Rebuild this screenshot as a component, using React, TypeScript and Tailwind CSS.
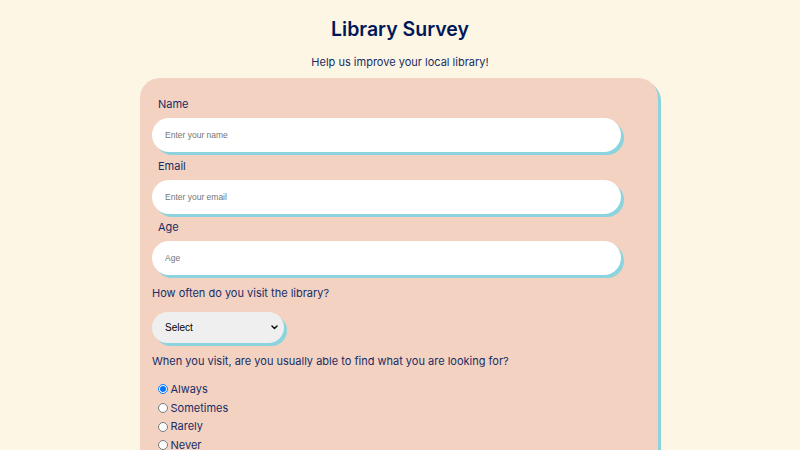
import { type FC } from "react";

const fields = [
  { label: "Name", placeholder: "Enter your name", type: "text", gap: "mt-[7px]" },
  { label: "Email", placeholder: "Enter your email", type: "email", gap: "mt-[7px]" },
  { label: "Age", placeholder: "Age", type: "number", gap: "mt-[6px]" },
];

const visitOptions = ["Always", "Sometimes", "Rarely", "Never"];

const TextField: FC<{ label: string; placeholder: string; type: string; gap: string }> = ({
  label,
  placeholder,
  type,
  gap,
}) => {
  return (
    <div className="flex flex-col">
      <label className={`${gap} block h-[14px] pl-[6px] text-[11px] leading-[14px]`}>{label}</label>
      <input
        type={type}
        placeholder={placeholder}
        className="mt-[7px] h-[34px] w-[95%] rounded-full bg-white px-[13px] font-['Liberation_Sans',Arial,sans-serif] text-[8.5px] text-black shadow-[3px_3px_0_#8bd3dd] outline-none placeholder:text-[#757575]"
      />
    </div>
  );
};

const App: FC = () => {
  return (
    <div className="h-[450px] w-[800px] overflow-hidden bg-[#fef6e4] font-['Inter','Noto_Sans',sans-serif] text-[#172c66]">
      <h1 className="pt-[15px] text-center text-[19.5px] font-semibold leading-[28px] text-[#001858]">Library Survey</h1>
      <p className="mt-[12px] text-center text-[11px] leading-[14px]">Help us improve your local library!</p>

      <form className="mt-[9px] ml-[140px] w-[518px] rounded-[20px] bg-[#f3d2c1] px-[12px] pt-[12px] pb-[24px] shadow-[3px_3px_0_#8bd3dd]">
        {fields.map((field) => (
          <TextField key={field.label} {...field} />
        ))}

        <p className="mt-[11px] h-[14px] text-[11px] leading-[14px]">How often do you visit the library?</p>
        <div className="relative mt-[12px] w-[132px]">
          <select className="block h-[31px] w-[132px] appearance-none rounded-full bg-[#efefef] pl-[13px] font-['Liberation_Sans',Arial,sans-serif] text-[10px] text-black shadow-[3px_3px_0_#8bd3dd] outline-none">
            <option>Select</option>
            <option>Daily</option>
            <option>Weekly</option>
            <option>Monthly</option>
            <option>Rarely</option>
          </select>
          <svg
            className="pointer-events-none absolute right-[6px] top-[13px]"
            width="7"
            height="5"
            viewBox="0 0 7 5"
            fill="none"
          >
            <path d="M1 1l2.5 2.5L6 1" stroke="#111" strokeWidth="1.5" strokeLinecap="round" strokeLinejoin="round" />
          </svg>
        </div>

        <p className="mt-[11px] h-[14px] text-[11px] leading-[14px]">
          When you visit, are you usually able to find what you are looking for?
        </p>
        <div className="mt-[12px] flex flex-col pl-[6px]">
          {visitOptions.map((opt, i) => (
            <label key={opt} className="flex h-[18.7px] items-center gap-[2.5px] text-[11px]">
              <input type="radio" name="find" defaultChecked={i === 0} className="m-0 h-[10px] w-[10px]" />
              {opt}
            </label>
          ))}
        </div>
      </form>
    </div>
  );
};

export default App;
